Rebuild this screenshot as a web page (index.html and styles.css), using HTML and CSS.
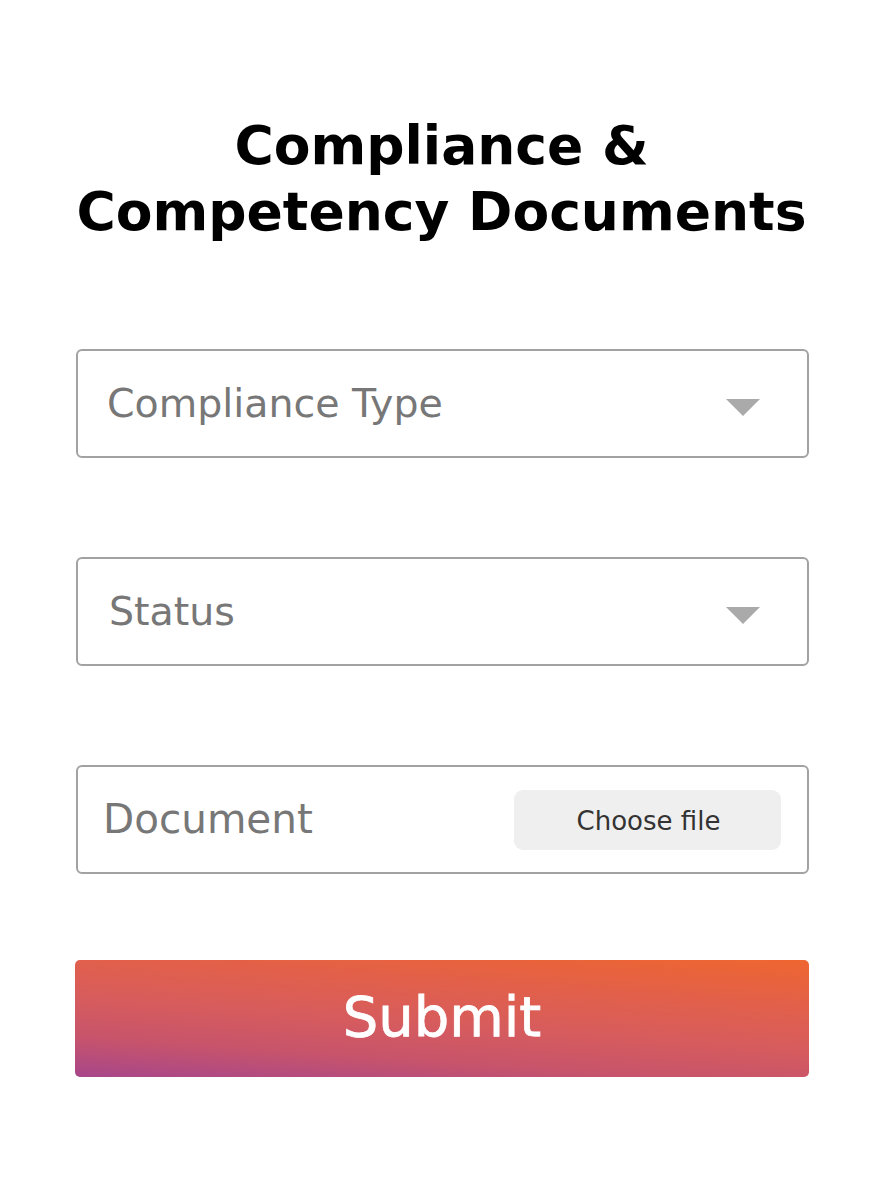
FILE: index.html
```html
<!DOCTYPE html>
<html>
<head>
<meta charset="utf-8">
<link rel="stylesheet" href="styles.css">
</head>
<body>
<main class="page">
  <h1 class="title">Compliance &amp;<br>Competency Documents</h1>
  <form class="form">
    <div class="field select">
      <span class="placeholder">Compliance Type</span>
      <span class="caret"></span>
    </div>
    <div class="field select">
      <span class="placeholder status">Status</span>
      <span class="caret"></span>
    </div>
    <div class="field file">
      <span class="placeholder doc">Document</span>
      <span class="choose">Choose file</span>
    </div>
    <button type="button" class="submit">Submit</button>
  </form>
</main>
</body>
</html>
```
FILE: styles.css
```css
html, body {
  margin: 0;
  padding: 0;
  background: #fff;
}
.page {
  padding: 113px 75px 0 75px;
  font-family: "DejaVu Sans", "Open Sans", sans-serif;
}
.title {
  margin: 0;
  text-align: center;
  font-size: 53.5px;
  line-height: 66px;
  font-weight: bold;
  color: #000;
}
.form {
  margin-top: 104px;
  display: flex;
  flex-direction: column;
}
.field {
  box-sizing: border-box;
  height: 109px;
  border: 2px solid #a2a2a2;
  border-radius: 6px;
  display: flex;
  align-items: center;
  justify-content: space-between;
  margin: 0 0 99px 1px;
  width: 733px;
}
.field.file {
  margin-bottom: 86px;
}
.placeholder {
  font-size: 39.5px;
  color: #777;
  padding-left: 29px;
  margin-top: -2px;
}
.placeholder.status { padding-left: 31px; font-size: 39.5px; }
.placeholder.doc { padding-left: 25px; font-size: 40.5px; }
.caret {
  width: 0;
  height: 0;
  border-left: 17px solid transparent;
  border-right: 17px solid transparent;
  border-top: 17px solid #aaa;
  margin-right: 47px;
  margin-top: 8px;
}
.choose {
  box-sizing: border-box;
  width: 267px;
  height: 60px;
  margin-right: 26px;
  background: #efefef;
  border-radius: 9px;
  display: flex;
  align-items: center;
  justify-content: center;
  font-size: 26px;
  color: #333;
  padding-left: 2px;
  padding-top: 2px;
}
.submit {
  height: 117px;
  width: 734px;
  border: 0;
  border-radius: 5px;
  background: linear-gradient(184deg, #ee6630 0%, #e2604a 28%, #d75c5c 52%, #c7546b 76%, #a7468a 100%);
  color: #fff;
  font-family: "DejaVu Sans", "Open Sans", sans-serif;
  font-size: 56px;
  font-weight: normal;
  -webkit-text-stroke: 0.8px #fff;
  padding: 0 0 4px 0;
}
```
